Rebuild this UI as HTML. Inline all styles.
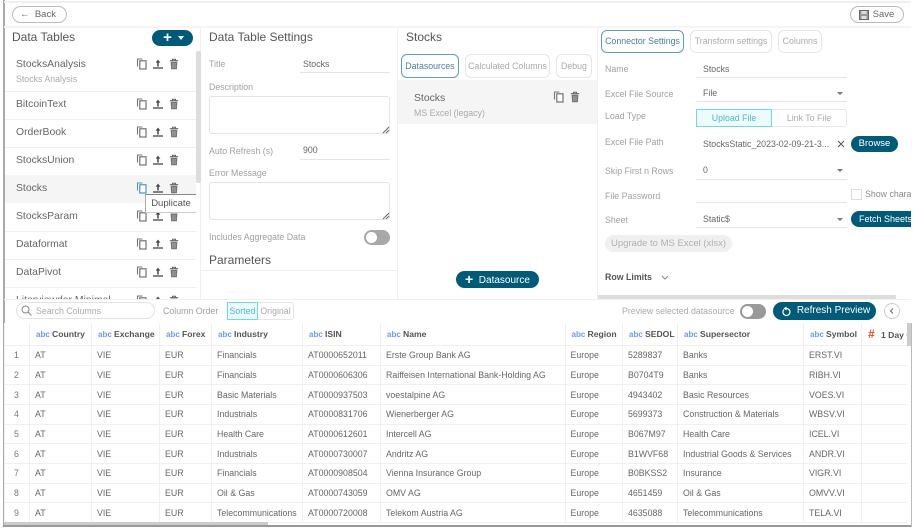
<!DOCTYPE html>
<html style="background:#fff"><head><meta charset="utf-8"><style>
html,body{margin:0;padding:0}
body{width:913px;height:529px;position:relative;overflow:hidden;font-family:"Liberation Sans",sans-serif;font-size:8.8px;color:#666;filter:blur(.3px)}
.a{position:absolute}
.t{position:absolute;white-space:nowrap;line-height:12px;transform:translateY(-6px)}
.h{font-size:12px;color:#555}
.t.n{font-size:10.4px;color:#666;transform:translateY(-5px)}
.l{color:#a0a0a0}
.v{color:#666}
.s{color:#aaa}
.u{position:absolute;height:1px;background:#e4e4e4}
.ln{position:absolute;background:#f0f0f0}
.b{position:absolute;box-sizing:border-box;border:1px solid #e6e6e6;border-radius:6px;text-align:center;color:#aaa;white-space:nowrap;overflow:hidden}
.p{position:absolute;background:#005a78;color:#fff;border-radius:9px;text-align:center;white-space:nowrap;overflow:hidden}
.ta{position:absolute;box-sizing:border-box;border:1px solid #e4e4e4;border-radius:3px}
.ic{position:absolute;width:12px;height:12px}
.tg{position:absolute;background:#a8a8a8;border-radius:8px}
.tg i{position:absolute;background:#fff;border-radius:50%}
table{position:absolute;left:4px;top:323px;border-collapse:collapse;table-layout:fixed;width:902px;font-size:8.8px;color:#666}
td,th{border:1px solid #f0f0f0;border-top:0;padding:0 0 0 5px;height:19.65px;box-sizing:border-box;white-space:nowrap;overflow:hidden;text-align:left;font-weight:normal}
th{height:22.6px;font-weight:bold;color:#555;font-size:8.6px;padding-left:6px}
th b{color:#6a9cf0;font-size:8px;display:inline-block;width:16px}
td:first-child{color:#777;padding-left:9px}
td:last-child,th:last-child{border-right:0}
</style></head><body>
<svg width="0" height="0" style="position:absolute"><defs>
<symbol id="c" viewBox="0 0 12 12"><path d="M1.5 8.500V1H6.500" fill="none" stroke="#777" stroke-width="1.1"/><rect x="3.800" y="2.800" width="6.200" height="8.200" fill="#fff" stroke="#666" stroke-width="1.1"/></symbol>
<symbol id="ch" viewBox="0 0 12 12"><path d="M1.5 8.500V1H6.500" fill="none" stroke="#5a98b0" stroke-width="1.1"/><rect x="3.800" y="2.800" width="6.200" height="8.200" fill="#fff" stroke="#3f8cab" stroke-width="1.1"/></symbol>
<symbol id="up" viewBox="0 0 12 12"><path d="M6 8.500V3" stroke="#444" stroke-width="1.5" fill="none"/><path d="M3.600 4.600 6 1.600l2.400 3z" fill="#444"/><path d="M1 10h10" stroke="#444" stroke-width="1.3"/></symbol>
<symbol id="tr" viewBox="0 0 12 12"><path d="M1.800 2.600h8.400M4.500 2.400V1.200h3v1.200" stroke="#666" stroke-width="1" fill="none"/><path d="M2.600 3.600h6.800l-.5 7.600H3.100z" fill="#777"/><path d="M5 5v5M7 5v5" stroke="#ccc" stroke-width=".6"/></symbol>
</defs></svg>

<div class="a" style="left:3px;top:0;width:1.5px;height:526px;background:#aaa"></div>
<div class="a" style="left:3px;top:525px;width:908px;height:1.5px;background:#999"></div>
<div class="a" style="left:911px;top:323px;width:1px;height:204px;background:#bbb"></div>
<div class="a" style="left:4px;top:1px;width:907px;height:2px;background:#f0f0f0"></div>
<div class="a" style="left:4px;top:26px;width:907px;height:1.5px;background:#f5f5f5"></div>

<div class="b" style="left:12px;top:6px;width:55px;height:17px;border-radius:9px;border-color:#bbb;line-height:15px;color:#666;font-size:9.5px;padding-right:3px">&#8592;&nbsp; Back</div>
<div class="b" style="left:850px;top:6px;width:54px;height:17px;border-radius:9px;border-color:#bbb;line-height:15px;color:#666;font-size:9.5px;padding-left:13px">Save</div>
<svg class="a" style="left:859px;top:10px" width="10" height="10"><rect x=".5" y=".5" width="9" height="9" fill="#999" stroke="#666"/><rect x="2.500" y="1" width="5" height="3" fill="#ddd"/><rect x="2.500" y="6" width="5" height="3" fill="#ddd"/></svg>

<!-- panel dividers -->
<div class="ln" style="left:200px;top:27px;width:1px;height:272px"></div>
<div class="ln" style="left:397px;top:27px;width:1px;height:272px"></div>
<div class="ln" style="left:597px;top:27px;width:1px;height:272px"></div>
<div class="ln" style="left:4px;top:299px;width:907px;height:1px"></div>

<!-- Data tables -->
<div class="t h" style="left:12px;top:37px">Data Tables</div>
<div class="p" style="left:152px;top:30px;width:41px;height:16px;font-size:15px;line-height:15px;font-weight:bold;padding-right:10px;box-sizing:border-box">+</div>
<div class="a" style="left:178px;top:36px;width:0;height:0;border:3px solid transparent;border-top:4px solid #fff"></div>
<div class="a" style="left:5px;top:175px;width:191px;height:28px;background:#f5f5f5"></div>
<div class="ln" style="left:5px;top:91px;width:191px;height:1px"></div>
<div class="ln" style="left:5px;top:119px;width:191px;height:1px"></div>
<div class="ln" style="left:5px;top:147px;width:191px;height:1px"></div>
<div class="ln" style="left:5px;top:231px;width:191px;height:1px"></div>
<div class="ln" style="left:5px;top:259px;width:191px;height:1px"></div>
<div class="ln" style="left:5px;top:287px;width:191px;height:1px"></div>
<div class="a" style="left:196px;top:51px;width:5px;height:132px;background:#ddd;border-radius:2px"></div>
<div class="t n" style="left:16px;top:64px">StocksAnalysis</div>
<div class="t s" style="left:16px;top:79px">Stocks Analysis</div>
<div class="t n" style="left:16px;top:104px">BitcoinText</div>
<div class="t n" style="left:16px;top:132px">OrderBook</div>
<div class="t n" style="left:16px;top:160px">StocksUnion</div>
<div class="t n" style="left:16px;top:188px">Stocks</div>
<div class="t n" style="left:16px;top:216px">StocksParam</div>
<div class="t n" style="left:16px;top:244px">Dataformat</div>
<div class="t n" style="left:16px;top:272px">DataPivot</div>
<div class="a" style="left:0;top:295px;width:196px;height:4px;overflow:hidden"><div class="t n" style="left:16px;top:5px">Literviewdar Minimal</div></div>
<svg class="ic" style="left:136px;top:58px"><use href="#c"/></svg><svg class="ic" style="left:152px;top:58px"><use href="#up"/></svg><svg class="ic" style="left:168px;top:58px"><use href="#tr"/></svg>
<svg class="ic" style="left:136px;top:98px"><use href="#c"/></svg><svg class="ic" style="left:152px;top:98px"><use href="#up"/></svg><svg class="ic" style="left:168px;top:98px"><use href="#tr"/></svg>
<svg class="ic" style="left:136px;top:126px"><use href="#c"/></svg><svg class="ic" style="left:152px;top:126px"><use href="#up"/></svg><svg class="ic" style="left:168px;top:126px"><use href="#tr"/></svg>
<svg class="ic" style="left:136px;top:154px"><use href="#c"/></svg><svg class="ic" style="left:152px;top:154px"><use href="#up"/></svg><svg class="ic" style="left:168px;top:154px"><use href="#tr"/></svg>
<svg class="ic" style="left:136px;top:182px"><use href="#ch"/></svg><svg class="ic" style="left:152px;top:182px"><use href="#up"/></svg><svg class="ic" style="left:168px;top:182px"><use href="#tr"/></svg>
<svg class="ic" style="left:136px;top:210px"><use href="#c"/></svg><svg class="ic" style="left:152px;top:210px"><use href="#up"/></svg><svg class="ic" style="left:168px;top:210px"><use href="#tr"/></svg>
<svg class="ic" style="left:136px;top:238px"><use href="#c"/></svg><svg class="ic" style="left:152px;top:238px"><use href="#up"/></svg><svg class="ic" style="left:168px;top:238px"><use href="#tr"/></svg>
<svg class="ic" style="left:136px;top:266px"><use href="#c"/></svg><svg class="ic" style="left:152px;top:266px"><use href="#up"/></svg><svg class="ic" style="left:168px;top:266px"><use href="#tr"/></svg>
<div class="a" style="left:136px;top:295px;width:44px;height:4px;overflow:hidden"><svg class="ic" style="left:0;top:0"><use href="#c"/></svg><svg class="ic" style="left:16px;top:0"><use href="#up"/></svg><svg class="ic" style="left:32px;top:0"><use href="#tr"/></svg></div>
<div class="a" style="left:145px;top:194px;width:51px;height:19px;box-sizing:border-box;background:#fff;border-top:1px solid #888;border-left:1px solid #aaa;border-bottom:1px solid #ccc;text-align:center;line-height:18px;font-size:9.5px;color:#555">Duplicate</div>

<!-- Settings -->
<div class="t h" style="left:209px;top:37px">Data Table Settings</div>
<div class="t l" style="left:209px;top:64px">Title</div>
<div class="t v" style="left:303px;top:64px">Stocks</div><div class="u" style="left:300px;top:72px;width:90px"></div>
<div class="t l" style="left:209px;top:87px">Description</div>
<div class="ta" style="left:209px;top:96px;width:181px;height:38px"></div>
<div class="t l" style="left:209px;top:151px">Auto Refresh (s)</div>
<div class="t v" style="left:303px;top:150px">900</div><div class="u" style="left:300px;top:159px;width:90px"></div>
<div class="t l" style="left:209px;top:173px">Error Message</div>
<div class="ta" style="left:209px;top:182px;width:181px;height:38px"></div>
<svg class="a" style="left:382px;top:126px" width="8" height="8"><path d="M1 7 7 1M4 7 7 4" stroke="#666"/></svg>
<svg class="a" style="left:382px;top:212px" width="8" height="8"><path d="M1 7 7 1M4 7 7 4" stroke="#666"/></svg>
<div class="t l" style="left:209px;top:237px">Includes Aggregate Data</div>
<div class="tg" style="left:364px;top:230px;width:26px;height:15px"><i style="left:2px;top:2px;width:11px;height:11px"></i></div>
<div class="t h" style="left:209px;top:260px">Parameters</div>
<div class="ln" style="left:201px;top:270px;width:196px;height:1px"></div>

<!-- Stocks -->
<div class="t h" style="left:406px;top:37px">Stocks</div>
<div class="b" style="left:401px;top:54px;width:58px;height:24px;line-height:22px;border-color:#5c9fb5;color:#4a7f96">Datasources</div>
<div class="b" style="left:465px;top:54px;width:85px;height:24px;line-height:22px">Calculated Columns</div>
<div class="b" style="left:556px;top:54px;width:36px;height:24px;line-height:22px">Debug</div>
<div class="a" style="left:398px;top:80px;width:199px;height:44px;background:#f5f5f5"></div>
<div class="t n" style="left:414px;top:98px">Stocks</div>
<div class="t s" style="left:414px;top:113px">MS Excel (legacy)</div>
<svg class="ic" style="left:553px;top:91px"><use href="#c"/></svg><svg class="ic" style="left:569px;top:91px"><use href="#tr"/></svg>
<div class="p" style="left:456px;top:271px;width:83px;height:17px;line-height:17px;font-size:10px"><span style="font-size:14px;font-weight:bold;vertical-align:-1px">+</span>&nbsp; Datasource</div>

<!-- Connector -->
<div class="b" style="left:601px;top:30px;width:83px;height:23px;line-height:21px;border-color:#5c9fb5;color:#4a7f96">Connector Settings</div>
<div class="b" style="left:690px;top:30px;width:82px;height:23px;line-height:21px">Transform settings</div>
<div class="b" style="left:778px;top:30px;width:44px;height:23px;line-height:21px">Columns</div>
<div class="t l" style="left:605px;top:69px">Name</div>
<div class="t v" style="left:703px;top:69px">Stocks</div><div class="u" style="left:696px;top:77px;width:151px"></div>
<div class="t l" style="left:605px;top:94px">Excel File Source</div>
<div class="t v" style="left:703px;top:93px">File</div><div class="u" style="left:696px;top:101px;width:151px"></div>
<div class="a" style="left:837px;top:92px;border:3px solid transparent;border-top:3px solid #777"></div>
<div class="t l" style="left:605px;top:116px">Load Type</div>
<div class="a" style="left:696px;top:109px;width:76px;height:18px;box-sizing:border-box;border:1px solid #6fdbe0;background:#edfbfc;color:#4db8c4;text-align:center;line-height:17px">Upload File</div>
<div class="a" style="left:772px;top:109px;width:75px;height:18px;box-sizing:border-box;border:1px solid #e6e6e6;border-left:0;border-radius:0 3px 3px 0;color:#aaa;text-align:center;line-height:17px">Link To File</div>
<div class="t l" style="left:605px;top:142px">Excel File Path</div>
<div class="t v" style="left:703px;top:144px">StocksStatic_2023-02-09-21-3...</div>
<svg class="a" style="left:837px;top:140px" width="8" height="8"><path d="M1 1 7 7M7 1 1 7" stroke="#555"/></svg>
<div class="p" style="left:851px;top:136px;width:47px;height:16px;line-height:16px;font-size:9.5px">Browse</div>
<div class="t l" style="left:605px;top:171px">Skip First n Rows</div>
<div class="t v" style="left:703px;top:170px">0</div><div class="u" style="left:696px;top:179px;width:151px"></div>
<div class="a" style="left:837px;top:169px;border:3px solid transparent;border-top:3px solid #777"></div>
<div class="t l" style="left:605px;top:196px">File Password</div>
<div class="u" style="left:696px;top:202px;width:151px"></div>
<div class="a" style="left:851px;top:189px;width:11px;height:11px;box-sizing:border-box;border:1px solid #ddd"></div>
<div class="a" style="left:865px;top:188px;width:46px;height:12px;overflow:hidden"><div class="t" style="left:0;top:6px;color:#888">Show characters</div></div>
<div class="t l" style="left:605px;top:220px">Sheet</div>
<div class="t v" style="left:703px;top:219px">Static$</div><div class="u" style="left:696px;top:227px;width:151px"></div>
<div class="a" style="left:837px;top:218px;border:3px solid transparent;border-top:3px solid #777"></div>
<div class="a" style="left:851px;top:211px;width:60px;height:16px;background:#005a78;color:#fff;border-radius:8px 0 0 8px;line-height:16px;font-size:9px;padding-left:8px;box-sizing:border-box;white-space:nowrap;overflow:hidden">Fetch Sheets</div>
<div class="a" style="left:605px;top:235px;width:127px;height:17px;background:#f0f0f0;border-radius:9px;text-align:center;line-height:17px;color:#b0b0b0;font-size:9.5px">Upgrade to MS Excel (xlsx)</div>
<div class="t" style="left:605px;top:277px;font-weight:bold;color:#555">Row Limits</div>
<svg class="a" style="left:661px;top:275px" width="8" height="5"><path d="M1 1l3 3 3-3" fill="none" stroke="#888"/></svg>
<div class="a" style="left:598px;top:295px;width:298px;height:4px;background:#ddd"></div>

<!-- Toolbar -->
<div class="a" style="left:16px;top:302px;width:139px;height:17px;box-sizing:border-box;border:1px solid #e4e4e4;border-radius:9px"></div>
<svg class="a" style="left:21px;top:305px" width="11" height="11"><circle cx="4.500" cy="4.500" r="3.500" fill="none" stroke="#888"/><path d="M7 7l3.500 3.500" stroke="#888"/></svg>
<div class="t s" style="left:36px;top:311px">Search Columns</div>
<div class="t l" style="left:163px;top:311px">Column Order</div>
<div class="a" style="left:227px;top:302px;width:31px;height:18px;box-sizing:border-box;border:1px solid #6fdbe0;background:#edfbfc;color:#4db8c4;text-align:center;line-height:17px">Sorted</div>
<div class="a" style="left:258px;top:302px;width:36px;height:18px;box-sizing:border-box;border:1px solid #e6e6e6;border-left:0;border-radius:0 3px 3px 0;color:#aaa;text-align:center;line-height:17px">Original</div>
<div class="t s" style="left:622px;top:311px">Preview selected datasource</div>
<div class="tg" style="left:740px;top:304px;width:26px;height:15px;background:#999"><i style="left:2px;top:2px;width:11px;height:11px"></i></div>
<div class="p" style="left:773px;top:302px;width:103px;height:18px;line-height:18px;font-size:10px;padding-left:18px;box-sizing:border-box">Refresh Preview</div>
<svg class="a" style="left:781px;top:306px" width="11" height="11"><path d="M3 3.500A3.500 3.500 0 1 0 5.500 2.500" fill="none" stroke="#fff" stroke-width="1.2"/><path d="M5.500 0.500v4l-3-2z" fill="#fff"/></svg>
<div class="a" style="left:884px;top:303px;width:16px;height:16px;box-sizing:border-box;border:1px solid #ccc;border-radius:50%"></div>
<svg class="a" style="left:889px;top:308px" width="6" height="6"><path d="M4 .5 1.500 3 4 5.500" fill="none" stroke="#666"/></svg>

<!-- Table -->
<table>
<colgroup><col style="width:25px"><col style="width:62px"><col style="width:68px"><col style="width:52px"><col style="width:91px"><col style="width:78px"><col style="width:184.500px"><col style="width:57.500px"><col style="width:55px"><col style="width:126px"><col style="width:58px"><col style="width:45px"></colgroup>
<tr><th></th><th><b>abc</b>Country</th><th><b>abc</b>Exchange</th><th><b>abc</b>Forex</th><th><b>abc</b>Industry</th><th><b>abc</b>ISIN</th><th><b>abc</b>Name</th><th><b>abc</b>Region</th><th><b>abc</b>SEDOL</th><th><b>abc</b>Supersector</th><th><b>abc</b>Symbol</th><th><b style="color:#e0502a;font-size:12px;width:13px">#</b>1 Day Change</th></tr>
<tr><td>1</td><td>AT</td><td>VIE</td><td>EUR</td><td>Financials</td><td>AT0000652011</td><td>Erste Group Bank AG</td><td>Europe</td><td>5289837</td><td>Banks</td><td>ERST.VI</td><td></td></tr>
<tr><td>2</td><td>AT</td><td>VIE</td><td>EUR</td><td>Financials</td><td>AT0000606306</td><td>Raiffeisen International Bank-Holding AG</td><td>Europe</td><td>B0704T9</td><td>Banks</td><td>RIBH.VI</td><td></td></tr>
<tr><td>3</td><td>AT</td><td>VIE</td><td>EUR</td><td>Basic Materials</td><td>AT0000937503</td><td>voestalpine AG</td><td>Europe</td><td>4943402</td><td>Basic Resources</td><td>VOES.VI</td><td></td></tr>
<tr><td>4</td><td>AT</td><td>VIE</td><td>EUR</td><td>Industrials</td><td>AT0000831706</td><td>Wienerberger AG</td><td>Europe</td><td>5699373</td><td>Construction &amp; Materials</td><td>WBSV.VI</td><td></td></tr>
<tr><td>5</td><td>AT</td><td>VIE</td><td>EUR</td><td>Health Care</td><td>AT0000612601</td><td>Intercell AG</td><td>Europe</td><td>B067M97</td><td>Health Care</td><td>ICEL.VI</td><td></td></tr>
<tr><td>6</td><td>AT</td><td>VIE</td><td>EUR</td><td>Industrials</td><td>AT0000730007</td><td>Andritz AG</td><td>Europe</td><td>B1WVF68</td><td>Industrial Goods &amp; Services</td><td>ANDR.VI</td><td></td></tr>
<tr><td>7</td><td>AT</td><td>VIE</td><td>EUR</td><td>Financials</td><td>AT0000908504</td><td>Vienna Insurance Group</td><td>Europe</td><td>B0BKSS2</td><td>Insurance</td><td>VIGR.VI</td><td></td></tr>
<tr><td>8</td><td>AT</td><td>VIE</td><td>EUR</td><td>Oil &amp; Gas</td><td>AT0000743059</td><td>OMV AG</td><td>Europe</td><td>4651459</td><td>Oil &amp; Gas</td><td>OMVV.VI</td><td></td></tr>
<tr><td>9</td><td>AT</td><td>VIE</td><td>EUR</td><td>Telecommunications</td><td>AT0000720008</td><td>Telekom Austria AG</td><td>Europe</td><td>4635088</td><td>Telecommunications</td><td>TELA.VI</td><td></td></tr>
</table>
<div class="a" style="left:907px;top:323px;width:4px;height:23px;background:#ccc"></div>
<div class="a" style="left:4px;top:522px;width:264px;height:3px;background:#ccc"></div>
</body></html>
